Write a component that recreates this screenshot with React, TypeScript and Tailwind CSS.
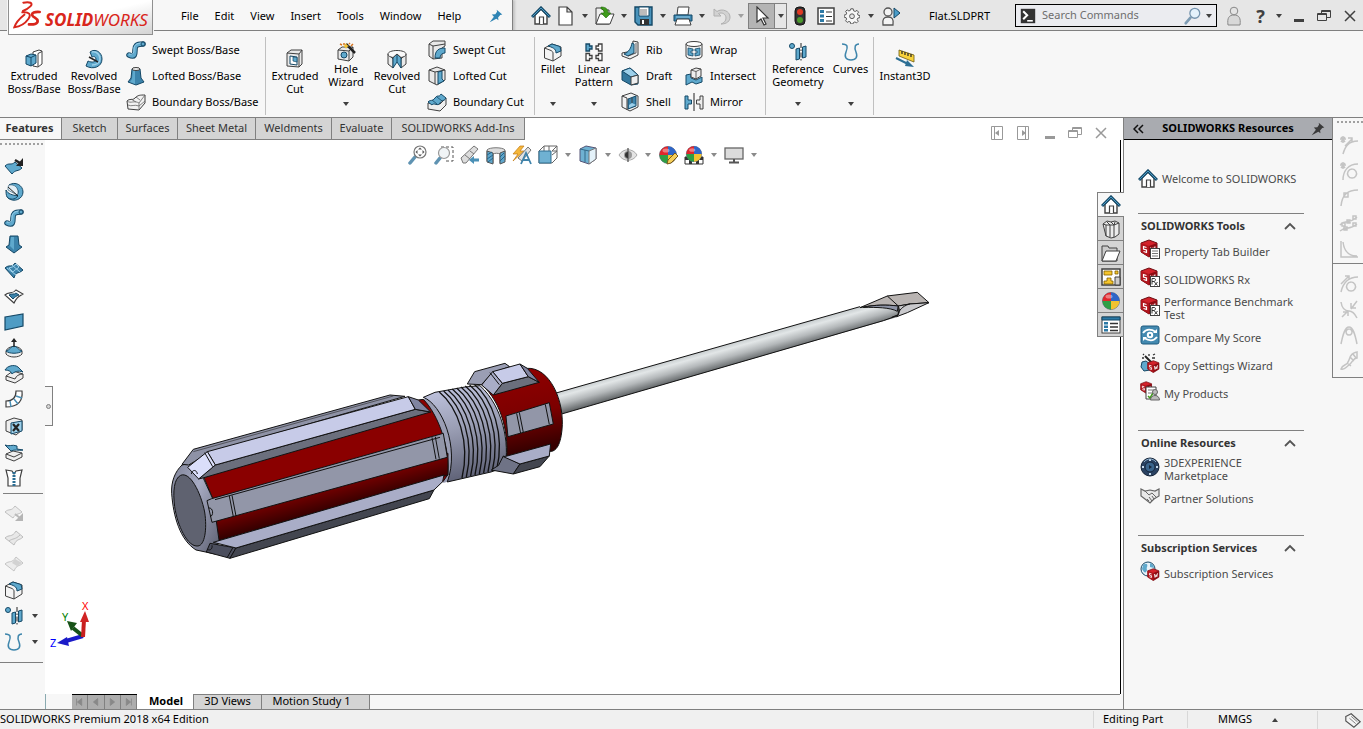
import React from 'react';

type IconProps = { name: string; size?: number };

const BLUE = '#5fa9cd';
const LIGHT = '#9dd0ea';
const NAVY = '#154866';
const INK = '#404040';
const PALE = '#e9e9e9';

const solidCube = (
  <>
    <path d="M1 4l8-3 8 3v9l-8 5-8-5z" fill="#d3222b" stroke="#6d0d12" />
    <path d="M1 4l8 3v11l-8-5z" fill="#b0141c" />
    <path d="M17 4L9 7v11l8-5z" fill="#8e0c13" />
    <path d="M6.500 8.500l-3-1v2.500l3 1v2.500l-3-1M10.500 8.500l1 5 1.500-4 1 3 1-5" fill="none" stroke="#fff" strokeWidth="1.200" />
  </>
);

const smallPaper = (
  <rect x="10.500" y="9.500" width="9" height="10" fill="#fff" stroke={INK} />
);

const colorBall = (
  <>
    <circle cx="10" cy="10" r="8.500" fill="#2f6fd0" stroke="#555" strokeWidth=".6" />
    <path d="M10 10V1.500A8.500 8.500 0 0 1 18.500 10z" fill="#2f66c8" />
    <path d="M10 10V1.500A8.500 8.500 0 0 0 1.500 10z" fill="#e0262b" />
    <path d="M10 10h8.500A8.500 8.500 0 0 1 10 18.500z" fill="#f2c22f" />
    <path d="M10 10v8.500A8.500 8.500 0 0 1 1.500 10z" fill="#2f9e44" />
    <ellipse cx="8" cy="5.500" rx="3.500" ry="2" fill="#fff" opacity=".4" />
  </>
);

const icons: Record<string, React.ReactNode> = {
  extrudedBoss: (
    <>
      <path d="M9 3l6-2 3 1v13l-4 3-5-1z" fill="#fff" stroke={INK} />
      <path d="M14 4.500v13M14 4.500l4-2" stroke={INK} fill="none" />
      <path d="M2 7l5-2 5 1v8l-5 3-5-2z" fill={BLUE} stroke={NAVY} />
      <path d="M2 7l5 1.500L12 6M7 8.500V17" stroke={NAVY} fill="none" />
    </>
  ),
  revolvedBoss: (
    <>
      <path d="M6 3c5-4 12 0 12 7 0 8-9 11-16 7l2-5c4 2 8 1 8-2 0-2-2-3-4-2z" fill={BLUE} stroke={NAVY} />
      <path d="M8 3c5-1 8 3 8 7s-4 6-8 6" stroke={LIGHT} strokeWidth="1.500" fill="none" />
      <path d="M5 8l9 5" stroke="#222" strokeWidth="1.500" />
    </>
  ),
  sweep: (
    <>
      <path d="M3 15c6 3 6-1 6-5s1-6 8-6" stroke={NAVY} strokeWidth="5.500" strokeLinecap="round" fill="none" />
      <path d="M3 15c6 3 6-1 6-5s1-6 8-6" stroke={BLUE} strokeWidth="3.500" strokeLinecap="round" fill="none" />
      <path d="M3 14c5 1 5-2 5-5s2-6 8-6" stroke={LIGHT} strokeWidth="1" fill="none" />
      <circle cx="17" cy="4" r="2" fill={BLUE} stroke={NAVY} />
    </>
  ),
  loft: (
    <>
      <path d="M6 3l-1 9-3 4 8 3 8-3-3-4-1-9z" fill="#3c83ab" stroke={NAVY} />
      <path d="M7 4l-1 9-2 3 5 2V4z" fill={BLUE} />
      <ellipse cx="10" cy="3" rx="4" ry="1.500" fill="#eee" stroke={INK} />
    </>
  ),
  loftDown: (
    <>
      <path d="M6 2l-1 9-3 2 8 6 8-6-3-2-1-9z" fill="#3c83ab" stroke={NAVY} />
      <path d="M7 3l-1 9 4 4V3z" fill={BLUE} />
    </>
  ),
  boundaryBoss: (
    <>
      <path d="M1 9c3-3 5 0 8-3s5-3 10-3v8l-6 7-11-1z" fill="#f2f2f2" stroke={INK} />
      <path d="M1 9c4 3 7-1 12 2l6-8M13 11v6M5 7l5 3M10 5l4 3M2 13c4 2 6-1 11 1l6-5" fill="none" stroke="#666" strokeWidth=".8" />
    </>
  ),
  boundaryCut: (
    <>
      <path d="M1 11l12 1 6-6v7l-6 6-12-2z" fill="#eee" stroke={INK} />
      <path d="M1 10c3-3 4 0 7-4s4 0 6-4l5 4c-2 4-4 1-6 5s-6-1-8 2z" fill={BLUE} stroke={NAVY} />
      <path d="M5 8l5 4M10 5l5 4" stroke={NAVY} strokeWidth=".8" />
    </>
  ),
  extrudedCut: (
    <>
      <path d="M2 4l4-3h11v14l-3 3-12-1z" fill={PALE} stroke={INK} />
      <path d="M2 4l12 1 3-4M14 5v13" fill="none" stroke={INK} />
      <path d="M5 7l7 1v8l-7-1z" fill="#fff" stroke={NAVY} />
      <path d="M8 8l4 .5V13l-4-1z" fill={BLUE} stroke={NAVY} strokeWidth=".7" />
    </>
  ),
  holeWizard: (
    <>
      <path d="M2 8l4-3h11v10l-4 4-11-2z" fill={PALE} stroke={INK} />
      <path d="M2 8l11 1 4-4M13 9v10" fill="none" stroke={INK} />
      <circle cx="8" cy="13" r="3" fill={BLUE} stroke={NAVY} />
      <path d="M10 2l9 9" stroke="#222" strokeWidth="2.500" />
      <path d="M4 2l2 1M8 1v2M13 1l1 1M17 2l-2 2" stroke="#d8731c" strokeWidth="1.500" />
      <path d="M10 1l1 2 2 1-2 1-1 2-1-2-2-1 2-1z" fill="#f6c431" />
    </>
  ),
  revolvedCut: (
    <>
      <path d="M1 5v10l5 4v-9zM19 5v10l-5 4v-9z" fill={PALE} stroke={INK} />
      <path d="M6 9l4-4 4 4v10l-4-6-4 6z" fill={BLUE} stroke={NAVY} />
      <path d="M10 5v8" stroke={NAVY} />
      <path d="M1 5c0-2 4-3.500 9-3.500S19 3 19 5c0 2-2 3-5 3.500L10 5 6 8.500C3 8 1 7 1 5z" fill="#fafafa" stroke={INK} />
    </>
  ),
  sweptCut: (
    <>
      <path d="M2 4l4-3h12v5l-3 2v10l-9 1-4-3z" fill={PALE} stroke={INK} />
      <path d="M2 4l4 2 12-2M6 6v13" fill="none" stroke={INK} />
      <path d="M8 18C8 10 12 8 18 8v5c-3 0-5 2-5 5z" fill={BLUE} stroke={NAVY} />
    </>
  ),
  loftedCut: (
    <>
      <path d="M2 4l8-3 8 3v10l-8 5-8-4z" fill={PALE} stroke={INK} />
      <path d="M2 4l6 2v12M8 6l10-2" fill="none" stroke={INK} />
      <path d="M11 6l4-1v8l2 2-6 3z" fill={BLUE} stroke={NAVY} />
    </>
  ),
  fillet: (
    <>
      <path d="M1.500 6L9 2l9 3v9l-8 5-8.500-3z" fill="#f4f4f4" stroke={INK} />
      <path d="M10 19v-8c0-1-1-2-2-2.500L1.500 6" fill="none" stroke={INK} />
      <path d="M5 4l4-2 8 2.500 1 4.500-5 2c0-3-1-5-8-7z" fill={BLUE} stroke={NAVY} />
    </>
  ),
  linearPattern: (
    <>
      <path d="M2 2h3.500v2H8v3H5.500v2H2z" fill={BLUE} stroke={NAVY} strokeWidth="1.300" />
      <path d="M18 2h-3.500v2H12v3h2.500v2H18zM2 11.500h3.500v2H8v3H5.500v2H2zM18 11.500h-3.500v2H12v3h2.500v2H18z" fill="#fff" stroke={INK} strokeWidth="1.300" />
    </>
  ),
  rib: (
    <>
      <path d="M13 1l5 1v13l-8 4-8-3v-3l10-2z" fill="#f0f0f0" stroke={INK} />
      <path d="M4 14C9 12 11 8 12 3l2 1v9l-6 3z" fill={BLUE} stroke={NAVY} />
      <path d="M8 16l8-3V3" fill="none" stroke={INK} strokeWidth=".8" />
    </>
  ),
  draft: (
    <>
      <path d="M2 5l8-3 8 7v9l-7 1-9-5z" fill="#34789e" stroke={NAVY} />
      <path d="M2 5l8-3 8 7-7 2z" fill={LIGHT} stroke={NAVY} />
      <path d="M11 11l7-2v8l-7 2z" fill="#eee" stroke={INK} />
    </>
  ),
  shell: (
    <>
      <path d="M2 4l9-3 7 3v11l-8 4-8-4z" fill="#f2f2f2" stroke={INK} />
      <path d="M8 7l8-3v10l-8 3z" fill="#3c83ab" stroke={NAVY} />
      <path d="M9 13l3-2 4 2-7 3z" fill={LIGHT} />
      <path d="M2 4l5 2v12M12 6v5" fill="none" stroke={INK} />
    </>
  ),
  wrap: (
    <>
      <path d="M2 4v12c0 4 16 4 16 0V4" fill="#f0f0f0" stroke={INK} />
      <ellipse cx="10" cy="4" rx="8" ry="2.500" fill="#fff" stroke={INK} />
      <path d="M4 8l5 1v2H7v2h2v3l-5-1zM11 9l5-1v7l-5 1v-3h2v-2h-2z" fill={BLUE} stroke={NAVY} strokeWidth=".8" />
    </>
  ),
  intersect: (
    <>
      <path d="M2 9l5-1v4l5 2 6-3v5l-6 2-4-2-6 3z" fill={BLUE} stroke={NAVY} />
      <path d="M7 4l5-2 5 1v7l-5 3-5-2z" fill="#eee" stroke={INK} />
      <path d="M7 4l5 1.500 5-2.500M12 5.500V13" fill="none" stroke={INK} strokeWidth=".8" />
    </>
  ),
  mirror: (
    <>
      <path d="M1 4h3v4h3.500v4H4v5H1z" fill={BLUE} stroke={NAVY} />
      <path d="M19 4h-3v4h-3.500v4H16v5h3z" fill="#eee" stroke={INK} />
      <path d="M10 1v18" stroke="#222" />
    </>
  ),
  refGeometry: (
    <>
      <circle cx="4" cy="4" r="2.500" fill={BLUE} stroke={NAVY} />
      <path d="M8 7l3.500-1v11L8 18zM14.500 5L18 4v11l-3.500 1z" fill={BLUE} stroke={NAVY} />
      <path d="M13 1v18" stroke="#222" strokeDasharray="5 1.500 1.500 1.500" />
    </>
  ),
  curves: <path d="M1 2c6 0 6 3 4 8s0 8 5 8 7-3 5-8-1-8 3-8" fill="none" stroke="#3f86ac" strokeWidth="1.500" />,
  instant: (
    <>
      <path d="M4 1l15 5v7L4 7z" fill="#f8d23c" stroke="#6b5a10" strokeWidth=".8" />
      <path d="M7 2v3M10 3v3M13 4v3M16 5v3" stroke="#222" strokeWidth="1.200" />
      <path d="M1 9l12 6" stroke="#2c6e94" strokeWidth="2" />
      <path d="M12 11l7 7-9-1z" fill="#2c6e94" />
    </>
  ),
  home: (
    <>
      <path d="M4 9v9h12V9l-6-6z" fill="#fff" stroke={INK} strokeWidth="1.400" />
      <path d="M8.500 18v-7h4v7" fill="#fff" stroke={INK} strokeWidth="1.200" />
      <path d="M1 11l9-9 9 9" fill="none" stroke="#164a68" strokeWidth="3" />
      <path d="M1.500 10.500L10 2l8.500 8.500" fill="none" stroke="#4c9cc6" strokeWidth="1" />
    </>
  ),
  page: <path d="M3 1h8l5 5v13H3zM11 1v5h5" fill="#fff" stroke={INK} strokeWidth="1.200" />,
  open: (
    <>
      <path d="M1 2h5l2 2h6v14H1z" fill="#eee" stroke={INK} />
      <path d="M5 8h14l-4 10H1z" fill="#fff" stroke={INK} />
      <path d="M6 1c5 0 7 2 7 6h3l-5 5-5-5h3c0-3-1-4-3-4z" fill="#3f9a1c" stroke="#246b0b" strokeWidth=".6" />
    </>
  ),
  save: (
    <>
      <path d="M1 1h17v18H4l-3-3z" fill="#4993bb" stroke={NAVY} strokeWidth="1.400" />
      <path d="M5 1h10v9H5z" fill="#fff" stroke={NAVY} />
      <path d="M6 4h7M6 6h7M6 8h7" stroke="#555" strokeWidth=".8" />
      <path d="M6 13h9v6H6z" fill="#333" />
      <path d="M8 14h2v4H8z" fill="#fff" />
    </>
  ),
  print: (
    <>
      <path d="M5 1h11l-1 8H4z" fill="#fff" stroke={INK} />
      <path d="M1 9h18v6H1z" fill="#3d88b2" stroke={NAVY} />
      <path d="M3 11h14" stroke={LIGHT} />
      <path d="M4 13h12l2 6H2z" fill="#fff" stroke={INK} />
    </>
  ),
  undo: <path d="M2 3v7h7L6.500 7.500C10 6 14 8 14 12c0 3-2 5-5 6 6 0 9-3 9-7 0-6-8-9-13-5.500z" fill="#d2d2d2" stroke="#b0b0b0" />,
  pointer: <path d="M5 1v15l4-3 3 6 2-1-3-6h5z" fill="#fff" stroke="#333" strokeWidth="1.200" />,
  traffic: (
    <>
      <rect x="5" y="1" width="10" height="18" rx="4" fill="#333" stroke="#111" />
      <circle cx="10" cy="6" r="3" fill="#e03a24" />
      <circle cx="10" cy="14" r="3" fill="#4a9a2c" />
    </>
  ),
  list: (
    <>
      <rect x="2" y="2" width="16" height="16" fill="#fff" stroke={INK} strokeWidth="1.500" />
      <path d="M4 4h4v3H4zM4 8.500h4v3H4zM4 13h4v3H4z" fill="#2c79a5" />
      <path d="M10 6h6M10 10.500h6M10 15h6" stroke="#333" strokeWidth="1.200" />
    </>
  ),
  listBlue: (
    <>
      <rect x="1" y="2" width="18" height="16" fill="#fff" stroke={INK} />
      <path d="M1 2h18v3H1z" fill="#2c79a5" stroke={NAVY} />
      <path d="M3 7h4v2.500H3zM3 10.500h4V13H3zM3 14h4v2.500H3z" fill="#2c79a5" />
      <path d="M9 8.500h8M9 12h8M9 15.500h8" stroke="#333" strokeWidth="1.300" />
    </>
  ),
  gear: (
    <>
      <path
        d="M8.500 1h3l.5 2.500 2 .8L16.300 3l1.900 2.200-1.400 2 .8 1.800 2.200.5v2.500l-2.500.6-.8 1.900 1.300 2.100-2 2-2.200-1.200-1.900.8L11.200 20H8.600L8 17.600l-1.900-.8L4 18l-2-2 1.300-2.100-.8-1.900L.2 11.500V8.800l2.400-.5.8-1.900L2 4.200 4 2.400l2.100 1.300 1.900-.8z"
        fill="#f7f7f7"
        stroke="#555"
        strokeWidth="1.200"
      />
      <circle cx="10" cy="10.300" r="3" fill="#e6e6e6" stroke="#555" strokeWidth="1.200" />
    </>
  ),
  userPlay: (
    <>
      <path d="M2 19c-1-6 1-8 5-8s6 2 5 8z" fill="#f4f4f4" stroke="#555" strokeWidth="1.300" />
      <circle cx="7" cy="6" r="4" fill="#f4f4f4" stroke="#555" strokeWidth="1.300" />
      <path d="M13 2l6 5-6 5z" fill="#4a9cc8" stroke={NAVY} />
    </>
  ),
  user: (
    <>
      <path d="M4 19c-1-7 1-10 6-10s7 3 6 10z" fill="#d8d8d8" stroke="#888" />
      <circle cx="10" cy="5" r="3.800" fill="#e4e4e4" stroke="#888" />
    </>
  ),
  pinBlue: <path d="M11 1l8 7-3 .5-3 3.500.5 4-3-2L1 19l6-8-3-3 5-.5L11.500 4z" fill="#2f84b4" />,
  pinDark: <path d="M11 1l8 7-3 .5-3 3.500.5 4-3-2L1 19l6-8-3-3 5-.5L11.500 4z" fill="#3a3a3a" />,
  prompt: (
    <>
      <rect x="1" y="1" width="18" height="18" fill="#333" />
      <path d="M4 4l5 5-5 5" fill="none" stroke="#fff" strokeWidth="2.500" />
      <path d="M9 16h7" stroke="#fff" strokeWidth="2" />
    </>
  ),
  search: (
    <>
      <path d="M7 12l-5 6" stroke="#7e9cb4" strokeWidth="3" strokeLinecap="round" />
      <circle cx="12" cy="7" r="5.500" fill="#e4f1fb" stroke="#7493ad" strokeWidth="1.400" />
    </>
  ),
  zoomFit: (
    <>
      <path d="M7 12l-5 6" stroke="#5f93b2" strokeWidth="3.500" strokeLinecap="round" />
      <circle cx="12" cy="7" r="6" fill="#fff" stroke="#777" strokeWidth="1.200" />
      <path d="M12 2.500l2 2h-4zM12 11.500l2-2h-4zM7.500 7l2-2v4zM16.500 7l-2-2v4z" fill="#555" />
    </>
  ),
  zoomArea: (
    <>
      <path d="M7 2h12v14H11" fill="none" stroke="#555" strokeDasharray="3 2" />
      <path d="M6 13l-4 5" stroke="#5f93b2" strokeWidth="3.500" strokeLinecap="round" />
      <circle cx="10" cy="8" r="5.500" fill="#f0f4f6" stroke="#999" strokeWidth="1.200" />
    </>
  ),
  prevView: (
    <>
      <path d="M1 13L14 1l4 3L6 18H3z" fill="#ddd" stroke="#777" />
      <path d="M5 10l5 4M10 6l4 3" stroke="#777" />
      <path d="M9 15l5-4v2.500h5v3h-5V19z" fill="#4a90b6" />
    </>
  ),
  section: (
    <>
      <path d="M1 5c2-3 16-3 18 0v10l-5 3v-9c-2-1-5-1-7 0v9l-6-2z" fill="#ddd" stroke="#777" />
      <path d="M1 6l6 2v11l-6-2zM14 8l5-2v11l-5 2z" fill="#5fa6cb" stroke="#555" />
      <path d="M1 10l5-3M1 14l6-4M2 17l5-4M14 12l4-4M14 16l5-5" stroke="#21658d" />
    </>
  ),
  dynamic: (
    <>
      <path d="M8 1L1 9h5l-5 7 11-10H8l4-5z" fill="#f5b73a" stroke="#c27a16" strokeWidth=".7" />
      <path d="M6 13L16 2l3 3L10 16z" fill="#e2e2e2" stroke="#777" />
      <path d="M9 19l5-11 5 11M11 15h6" fill="none" stroke="#3f83ab" strokeWidth="1.800" />
    </>
  ),
  orient: (
    <>
      <path d="M1 6l5-5h13v12l-5 5H1z" fill="#fff" stroke="#666" />
      <path d="M6 1v5M11 1v5M14 6h5M14 10l5-4M19 1l-5 5" stroke="#666" fill="none" />
      <path d="M1 6h12v12H1z" fill="#6fb1d2" stroke="#2e6c8f" />
    </>
  ),
  display: (
    <>
      <path d="M2 4l6-3 10 2v11l-7 5-9-3z" fill="#6fb1d2" stroke="#557" />
      <path d="M11 6l7-3v11l-7 5z" fill="#e4f2fa" stroke="#777" />
      <path d="M2 4l9 2M7 5v12" stroke="#346a88" fill="none" />
    </>
  ),
  eye: (
    <>
      <path d="M1 10c4-7 14-7 18 0-4 7-14 7-18 0z" fill="#e4e4e4" stroke="#aaa" />
      <circle cx="10" cy="10" r="4" fill="#999" />
      <path d="M10 3v14" stroke="#555" strokeWidth="1.300" />
      <path d="M10 7a3 3 0 0 0 0 6z" fill="#333" />
    </>
  ),
  appearance: (
    <>
      {colorBall}
      <path d="M9 19l1-4 7-7 3 3-7 7z" fill="#f6cf5a" stroke="#7a5a1c" />
    </>
  ),
  scene: (
    <>
      <path d="M1 12h18v7H1z" fill="#fff" stroke="#333" />
      <path d="M1 12h4v3H1zM15 12h4v3h-4zM5 15h3v4H5zM12 15h3v4h-3z" fill="#333" />
      <g transform="translate(1 0) scale(.9)">{colorBall}</g>
    </>
  ),
  monitor: (
    <>
      <rect x="1" y="3" width="18" height="11" fill="#dcdcdc" stroke="#666" strokeWidth="1.300" />
      <path d="M10 14v3M5 17.500h10" stroke="#555" strokeWidth="2" />
    </>
  ),
  ball: colorBall,
  library: (
    <>
      <path d="M2 5l4-3 4 1 4-1 4 2v11l-4 3-4 1-5-2z" fill="#ececec" stroke={INK} />
      <path d="M2 5l3 1v11M6 3l3 3v12M10 3l3 3v12M5 6h8l5-2M14 3l-1 3" fill="none" stroke={INK} />
    </>
  ),
  folder: (
    <>
      <path d="M1 3h6l1 2h8v13H1z" fill="#ccc" stroke={INK} />
      <path d="M5 8h14l-4 10H1z" fill="#fff" stroke={INK} />
    </>
  ),
  palette: (
    <>
      <rect x="1" y="2" width="18" height="16" fill="#fff" stroke={INK} strokeWidth="1.500" />
      <path d="M3 4h8v4H3zM14 4h3v3h-3zM3 14h3v-3h4v3h2v3H3z" fill="#f6c52c" stroke="#806000" strokeWidth=".8" />
      <path d="M14 10h5v8h-5z" fill="#ccc" stroke={INK} />
    </>
  ),
  surfExtrude: (
    <>
      <path d="M1 10c4-4 6 0 10-4l7 6c-4 4-6 1-10 6z" fill={BLUE} stroke={NAVY} />
      <path d="M11 4l5 3" stroke="#222" strokeWidth="2.500" />
      <path d="M19 2v8h-7z" fill="#222" />
    </>
  ),
  surfRevolve: (
    <>
      <path d="M5 3c6-4 14 0 14 7s-9 11-15 6c5 1 10-2 10-6S10 3 5 3z" fill={BLUE} stroke={NAVY} />
      <path d="M5 3c6-1 9 3 9 7 0 1 0 2-1 3L4 8c0-2 0-4 1-5z" fill="#e4f0f6" stroke={NAVY} strokeWidth=".6" />
      <path d="M2 8c2 4 6 5 12 6-3 4-8 4-11 1-1-2-1-5-1-7z" fill={BLUE} stroke={NAVY} />
      <path d="M4 5l10 9" stroke="#222" />
    </>
  ),
  surfBoundary: (
    <>
      <path d="M1 8c4-4 7 0 10-5l8 7c-4 4-7 1-9 8z" fill="#3c83ab" stroke={NAVY} />
      <path d="M5 8c3-1 5-1 7-4l3 3c-3 3-5 3-6 5zM3 8l9 7M8 5l8 7" stroke={LIGHT} fill="none" />
    </>
  ),
  surfFill: (
    <>
      <path d="M1 9c4-4 7 0 11-5l7 4c-5 3-6 3-9 9z" fill="#fff" stroke={INK} strokeWidth="1.200" />
      <path d="M5 9c3-2 5 0 7-2l3 2c-3 1-4 2-6 4z" fill="#3c83ab" stroke={NAVY} />
    </>
  ),
  surfPlane: <path d="M1 5l18-3v12L1 18z" fill="#4f9cc4" stroke={NAVY} strokeWidth="1.200" />,
  freeform: (
    <>
      <path d="M2 13c2-6 14-6 16 0v3c-3 4-13 4-16 0z" fill="#eee" stroke={INK} />
      <path d="M2 13c4-1 5-5 8-5s4 4 8 5c-3 3-13 3-16 0z" fill={BLUE} stroke={NAVY} />
      <path d="M10 9V3" stroke="#222" strokeWidth="1.500" />
      <path d="M10 0l3 4H7z" fill="#222" />
    </>
  ),
  ruled: (
    <>
      <path d="M2 12l7-5 10 3v4l-8 5-9-3z" fill="#eee" stroke={INK} />
      <path d="M2 12l9 3c1-3 4-5 8-5" fill="none" stroke={INK} />
      <path d="M1 6c2-4 9-6 13-3l5 5c-5-2-9 0-11 2-1-3-4-4-7-4z" fill={BLUE} stroke={NAVY} />
    </>
  ),
  bend: (
    <>
      <path d="M12 1h6c1 9-3 16-16 16v-6c7 0 10-3 10-10z" fill="#fff" stroke={INK} strokeWidth="1.200" />
      <path d="M12 6l6 2M10 9l4 5M6 11l1 6" stroke="#4a90b6" strokeWidth="1.500" />
    </>
  ),
  deleteFace: (
    <>
      <path d="M2 5l8-3 8 2v10l-6 5-10-4z" fill="#eee" stroke={INK} />
      <path d="M7 7l11-2v10l-11 3z" fill={LIGHT} stroke={NAVY} />
      <path d="M9 8l6 7M15 8l-6 7" stroke="#222" strokeWidth="2.200" />
    </>
  ),
  replaceFace: (
    <>
      <path d="M2 12l7-3 9 2v4l-8 4-8-3z" fill="#eee" stroke={INK} />
      <path d="M2 12l8 3 8-4" fill="none" stroke={INK} />
      <path d="M1 3c4 2 7-1 12 1v3l6 1c-5 1-8-1-12 1z" fill={BLUE} stroke={NAVY} />
    </>
  ),
  knit: (
    <>
      <path d="M2 2l6 1 2 3 2-3 6-1-2 8v8H4v-8z" fill="#fff" stroke={INK} strokeWidth="1.200" />
      <path d="M10 4v15" stroke="#2c6e94" strokeWidth="3" strokeDasharray="2 1" />
    </>
  ),
  greySurfArrow: (
    <>
      <path d="M1 10c4-4 6 0 10-6l7 6c-4 3-6 1-9 6z" fill="#ececec" stroke="#c0c0c0" />
      <path d="M11 12l5 4" stroke="#bbb" strokeWidth="2" />
      <path d="M19 11v8h-8z" fill="#b5b5b5" />
    </>
  ),
  greySurf: (
    <>
      <path d="M1 10c4-4 7 0 11-7l7 6c-4 4-6 1-9 8z" fill="#e8e8e8" stroke="#bdbdbd" />
      <path d="M5 13c4-3 6-1 11-6" stroke="#bdbdbd" fill="none" />
    </>
  ),
  greyPatch: (
    <>
      <path d="M1 10c4-4 7 0 11-7l7 6c-4 4-6 1-9 8z" fill="#ececec" stroke="#c4c4c4" />
      <path d="M11 5l7 4-5 3-5-3z" fill="#d2d2d2" />
    </>
  ),
  swBuilder: <>{solidCube}{smallPaper}<path d="M12 12h6M12 14.500h6M12 17h6" stroke="#777" /></>,
  swRx: <>{solidCube}{smallPaper}<path d="M12 17.500v-6h2c2 0 2 2.500 0 3h-2m2 0l3.500 4m0-3.500l-3 3.500" stroke="#222" fill="none" strokeWidth=".9" /></>,
  compare: (
    <>
      <rect x="1" y="1" width="18" height="18" rx="2" fill="#4389b0" stroke="#1f5b7e" />
      <circle cx="10" cy="10" r="2.200" fill="none" stroke="#fff" strokeWidth="2" />
      <path d="M3 8c3-4 8-4 13-1M17 12c-3 4-8 4-13 1" fill="none" stroke="#fff" strokeWidth="1.800" />
      <path d="M17 4v4h-4zM3 16v-4h4z" fill="#fff" />
    </>
  ),
  wizard: (
    <>
      <path d="M2 9l4-1 4 3v6l-6 1-3-4z" fill={BLUE} stroke={NAVY} />
      <path d="M5 3l8 8" stroke="#222" strokeWidth="2" />
      <path d="M3 1l1 1M9 1v2M13 2l2-1M12 5h3M2 5h2" stroke="#333" strokeWidth="1.300" />
      <g transform="translate(7 7) scale(.7)">{solidCube}</g>
    </>
  ),
  products: (
    <>
      <g transform="scale(.68)">{solidCube}</g>
      <path d="M6 6h10v12H6z" fill="#fff" stroke={INK} />
      <path d="M8 9h6M8 12h4" stroke="#777" />
      <path d="M8 15l2 2 3-5" stroke="#3f9a1c" fill="none" strokeWidth="1.500" />
      <circle cx="15" cy="11" r="2.500" fill="#bbb" stroke="#666" />
      <path d="M10.500 19c0-6 9-6 9 0z" fill="#bbb" stroke="#666" />
    </>
  ),
  market: (
    <>
      <circle cx="10" cy="10" r="9" fill="#2a4262" stroke="#142236" />
      <circle cx="10" cy="10" r="5" fill="#3a648c" stroke="#16263c" />
      <path d="M9 8l3 2-3 2z" fill="#152437" />
      <path d="M10 2v2M10 16v2M2 10h2M16 10h2" stroke="#c4d8ea" strokeWidth="2" />
      <path d="M4 5c3-4 9-4 12 0" stroke="#8fb2d0" fill="none" />
    </>
  ),
  handshake: (
    <>
      <path d="M1 3l4 2 5-1 5 1 4-2v7l-5 3-4 4-5-4-4-3z" fill="#e8e8e8" stroke="#666" strokeWidth="1.200" />
      <path d="M5 5l4 4 3-2 4 4M7 13l2 2M9 11l3 4M12 10l2 3" stroke="#666" fill="none" />
    </>
  ),
  globe: (
    <>
      <circle cx="8" cy="8" r="7" fill="#e8f3fa" stroke={NAVY} />
      <path d="M3 4c4-3 5 0 4 2s1 3-1 5-3-2-4-3zM10 2c3 1 4 3 4 5l-4-1z" fill={BLUE} />
      <g transform="translate(7 7) scale(.7)">{solidCube}</g>
    </>
  ),
};

const greyCurves = [
  'M4 19C6 12 9 6 19 6M6 11l7-7M9 3h4v4M4 1v7M1 4h6M2 2l4 5M6 2L2 7',
  'M4 19C4 10 9 3 19 3M13 8a4.500 4.500 0 1 0 .1 0M4 1v7M1 4h6M2 2l4 5M6 2L2 7',
  'M2 19C3 8 8 3 19 3M5 6h4v4H5z',
  'M1 12c5-6 8 0 17-8M1 18c6-5 9 0 17-7M3 10h3v3H3zM8 7h3v3H8zM14 3h3v3h-3zM5 14h3v3H5zM14 10h3v3h-3z',
  'M2 2v16h17M4 3c1 9 5 14 14 14',
  'M2 19C4 10 9 4 19 4M12 9a4.500 4.500 0 1 0 .1 0M2 11l8-8M6 3h4v4',
  'M2 3c1 7 4 9 8 9s6 3 8 7M18 2l-6 8M8 13l-5 5M12 4v5h5M4 13h5v4',
  'M2 19C4 9 6 2 10 2s6 7 8 17M10 4a3 3 0 1 0 .1 0',
  'M2 18c2-6 6-2 8-9s5-7 8-8v6c-4 0-4 4-8 7s-4 5-8 4zM8 12l4 3M11 6l4 4M14 3l3 4',
];

const Icon = ({ name, size = 20 }: IconProps) => (
  <svg viewBox="0 0 20 20" width={size} height={size} className="shrink-0" aria-hidden="true">
    {icons[name]}
  </svg>
);

const Arrow = ({ color = '#404040' }: { color?: string }) => (
  <svg viewBox="0 0 6 4" width={6} height={4} className="shrink-0" aria-hidden="true">
    <path d="M0 0h6L3 4z" fill={color} />
  </svg>
);

const menus = ['File', 'Edit', 'View', 'Insert', 'Tools', 'Window', 'Help'];

const fileTools = [
  { icon: 'page', label: 'New' },
  { icon: 'open', label: 'Open' },
  { icon: 'save', label: 'Save' },
  { icon: 'print', label: 'Print' },
  { icon: 'undo', label: 'Undo', off: true },
];

const Logo = () => (
  <div className="z-10 ml-2 flex h-[35px] w-[145px] shrink-0 items-center gap-1 border border-t-0 border-[#909090] bg-linear-to-br from-white from-50% to-[#d4d4d4] pl-1 shadow-[0_0_0_1px_#f7f7f7]">
    <svg viewBox="0 0 84 84" width={28} height={28} className="-mt-1 shrink-0" aria-hidden="true">
      <g fill="none" stroke="#d9261c" strokeLinecap="round">
        <path d="M31 5C50 1 62 6 52 16c-6 6-13 10-22 14" strokeWidth="6" />
        <path d="M28 34c20-2 28 6 18 20C36 68 20 77 4 79c4-13 16-27 30-38" strokeWidth="6" />
        <path d="M80 33c-15-1-25 2-22 10 2 7 16 8 16 17 0 9-12 11-26 10" strokeWidth="8" />
      </g>
    </svg>
    <span className="pt-1 text-[17px] italic leading-none text-[#d9261c]">
      <b>SOLID</b>WORKS
    </span>
  </div>
);

const TitleBar = () => (
  <header className="flex h-[31px] items-start border-b border-[#808080] bg-[#e6e6e6]">
    <Logo />
    <div className="flex h-8 w-[360px] shrink-0 items-center border-r border-[#808080] bg-[#f7f7f7] bg-clip-padding pl-5 shadow-[2px_0_2px_#c4c4c4] [clip-path:inset(0_-4px_2px_0)]">
      <nav className="flex flex-1">
        {menus.map((m) => (
          <button key={m} className="px-2">{m}</button>
        ))}
      </nav>
      <button aria-label="Pin menu" className="mr-2 p-px">
        <Icon name="pinBlue" size={14} />
      </button>
    </div>
    <div className="flex h-[31px] shrink-0 items-center pl-[15px]">
      <button aria-label="Home" className="flex w-[25px] justify-center"><Icon name="home" /></button>
      {fileTools.map((t) => (
        <div key={t.icon} className="flex w-[39px] items-center">
          <button aria-label={t.label} className="flex w-[25px] justify-center"><Icon name={t.icon} /></button>
          <button aria-label={`${t.label} options`} className="flex w-[14px] justify-center">
            <Arrow color={t.off ? '#a0a0a0' : '#404040'} />
          </button>
        </div>
      ))}
      <div className="flex h-[26px] w-[39px] border border-[#808080]">
        <button aria-label="Select" className="flex w-[26px] items-center justify-center border-r border-[#808080] bg-[#b4b4b4]">
          <Icon name="pointer" />
        </button>
        <button aria-label="Select options" className="flex flex-1 items-center justify-center"><Arrow /></button>
      </div>
      <button aria-label="Rebuild" className="flex w-[26px] justify-center"><Icon name="traffic" /></button>
      <button aria-label="File properties" className="flex w-[26px] justify-center"><Icon name="list" /></button>
      <button aria-label="Options" className="flex w-[25px] justify-center"><Icon name="gear" size={16} /></button>
      <button aria-label="Options list" className="flex w-[14px] justify-center"><Arrow /></button>
      <button aria-label="Login" className="flex w-[26px] justify-center"><Icon name="userPlay" /></button>
    </div>
    <h1 className="flex h-8 flex-1 items-center justify-center">Flat.SLDPRT</h1>
    <div className="mt-1 flex h-[23px] w-[202px] shrink-0 items-center border border-black bg-[#ebecf0] px-1">
      <Icon name="prompt" size={16} />
      <input
        aria-label="Search Commands"
        placeholder="Search Commands"
        className="ml-0.5 w-0 flex-1 bg-transparent px-1 outline-none placeholder:text-[#6e6e6e]"
      />
      <button aria-label="Search"><Icon name="search" size={18} /></button>
      <button aria-label="Search options" className="pl-1"><Arrow /></button>
    </div>
    <div className="flex h-[31px] shrink-0 items-center">
      <button aria-label="Account" className="flex w-[34px] justify-center"><Icon name="user" /></button>
      <button aria-label="Help" className="w-[19px] text-lg font-bold text-[#404040]">?</button>
      <button aria-label="Help options" className="flex w-[17px] justify-center"><Arrow /></button>
      <WindowButtons color="#404040" />
    </div>
  </header>
);

const WindowButtons = ({ color }: { color: string }) => (
  <>
    <button aria-label="Minimize" className="flex w-6 justify-center">
      <svg viewBox="0 0 14 14" width={14} height={14}><path d="M2 11.500h10" stroke={color} strokeWidth="3" /></svg>
    </button>
    <button aria-label="Restore" className="flex w-[26px] justify-center">
      <svg viewBox="0 0 14 14" width={14} height={14} fill="none" stroke={color}>
        <path d="M4.500 4V1.500h9v7H10M.5 4.500h9v7h-9zM.5 5.500h9M4.500 2.500h9" />
      </svg>
    </button>
    <button aria-label="Close" className="flex w-[26px] justify-center">
      <svg viewBox="0 0 14 14" width={14} height={14}><path d="M2 2l10 10M12 2L2 12" stroke={color} strokeWidth="1.500" /></svg>
    </button>
  </>
);

type BigProps = { icon: string; lines: string[]; className: string; menu?: boolean };

const BigTool = ({ icon, lines, className, menu }: BigProps) => (
  <button className={`flex shrink-0 flex-col items-center leading-[13px] ${menu ? 'pt-[5px]' : 'pt-3'} ${className}`}>
    <Icon name={icon} />
    <span className="flex h-10 flex-col items-center whitespace-nowrap">
      {lines.map((l) => <span key={l}>{l}</span>)}
    </span>
    {menu && <Arrow />}
  </button>
);

const SmallTools = ({ items, className }: { items: string[][]; className: string }) => (
  <div className={`flex shrink-0 flex-col ${className}`}>
    {items.map(([icon, label]) => (
      <button key={label} className="flex h-[26px] items-center gap-1.5 whitespace-nowrap">
        <Icon name={icon} />
        {label}
      </button>
    ))}
  </div>
);

const Ribbon = () => (
  <section className="flex border-b border-[#808080] bg-[#f7f7f7] pb-0.5 pt-1.5">
    <div className="flex border-r border-[#c0c0c0] pl-1">
      <BigTool icon="extrudedBoss" lines={['Extruded', 'Boss/Base']} className="w-[60px]" />
      <BigTool icon="revolvedBoss" lines={['Revolved', 'Boss/Base']} className="w-[60px]" />
      <SmallTools
        className="w-[141px] pl-0.5"
        items={[['sweep', 'Swept Boss/Base'], ['loft', 'Lofted Boss/Base'], ['boundaryBoss', 'Boundary Boss/Base']]}
      />
    </div>
    <div className="flex border-r border-[#c0c0c0] pl-[3px]">
      <BigTool icon="extrudedCut" lines={['Extruded', 'Cut']} className="w-[52px]" />
      <BigTool icon="holeWizard" lines={['Hole', 'Wizard']} className="w-[50px]" menu />
      <BigTool icon="revolvedCut" lines={['Revolved', 'Cut']} className="w-[52px]" />
      <SmallTools
        className="w-[111px] pl-1"
        items={[['sweptCut', 'Swept Cut'], ['loftedCut', 'Lofted Cut'], ['boundaryCut', 'Boundary Cut']]}
      />
    </div>
    <div className="flex border-r border-[#c0c0c0]">
      <BigTool icon="fillet" lines={['Fillet']} className="w-9" menu />
      <BigTool icon="linearPattern" lines={['Linear', 'Pattern']} className="w-[46px]" menu />
      <SmallTools className="w-[67px] pl-[3px]" items={[['rib', 'Rib'], ['draft', 'Draft'], ['shell', 'Shell']]} />
      <SmallTools className="w-[81px]" items={[['wrap', 'Wrap'], ['intersect', 'Intersect'], ['mirror', 'Mirror']]} />
    </div>
    <div className="flex border-r border-[#c0c0c0] pl-0.5">
      <BigTool icon="refGeometry" lines={['Reference', 'Geometry']} className="w-[60px]" menu />
      <BigTool icon="curves" lines={['Curves']} className="w-[45px]" menu />
    </div>
    <BigTool icon="instant" lines={['Instant3D']} className="w-[62px]" />
  </section>
);

const tabs = [
  { label: 'Sketch', width: 'w-[56px]' },
  { label: 'Surfaces', width: 'w-[60px]' },
  { label: 'Sheet Metal', width: 'w-[78px]' },
  { label: 'Weldments', width: 'w-[76px]' },
  { label: 'Evaluate', width: 'w-[60px]' },
  { label: 'SOLIDWORKS Add-Ins', width: 'w-[133px]' },
];

const TabRow = () => (
  <div className="flex h-[22px] justify-between bg-white">
    <div className="flex border-b border-[#808080]" role="tablist">
      <button role="tab" aria-selected="true" className="w-[62px] border-r border-[#808080] bg-[#f7f7f7] pr-0.5 font-bold text-[#333]">
        Features
      </button>
      {tabs.map((t) => (
        <button key={t.label} role="tab" className={`${t.width} whitespace-nowrap border-r border-[#808080] bg-[#d4d4d4] text-[#333]`}>
          {t.label}
        </button>
      ))}
    </div>
    <div className="flex items-start pr-[9px] pt-2">
      <button aria-label="Collapse left" className="flex w-[26px] justify-center">
        <svg viewBox="0 0 14 14" width={14} height={14}>
          <path d="M1.500.5h11v13h-11zM4.500 1v12" fill="none" stroke="#999" /><path d="M9 4v6L5 7z" fill="#999" />
        </svg>
      </button>
      <button aria-label="Collapse right" className="mr-0.5 flex w-[26px] justify-center">
        <svg viewBox="0 0 14 14" width={14} height={14}>
          <path d="M1.500.5h11v13h-11zM9.500 1v12" fill="none" stroke="#999" /><path d="M6 4v6l4-3z" fill="#999" />
        </svg>
      </button>
      <WindowButtons color="#999" />
    </div>
  </div>
);

const surfaceTools = [
  'surfExtrude', 'surfRevolve', 'sweep', 'loftDown', 'surfBoundary', 'surfFill', 'surfPlane',
  'freeform', 'ruled', 'bend', 'deleteFace', 'replaceFace', 'knit',
];
const surfaceEdits = ['greySurfArrow', 'greySurf', 'greyPatch', 'fillet', 'refGeometry', 'curves'];

const LeftToolbar = () => (
  <aside className="w-[45px] shrink-0 bg-[#f7f7f7] pr-0.5">
    <div className="mt-[3px] h-[10px] border-t-2 border-dotted border-[#a0a0a0]" />
    {surfaceTools.map((t) => (
      <button key={t} aria-label={t} className="flex h-[26px] items-center pl-1"><Icon name={t} /></button>
    ))}
    <hr className="mb-[5px] ml-[3px] mt-0.5 border-[#808080]" />
    {surfaceEdits.map((t, i) => (
      <div key={t} className="flex h-[26px] items-center gap-2 pl-1">
        <button aria-label={t}><Icon name={t} /></button>
        {i > 3 && <Arrow />}
      </div>
    ))}
    <hr className="mt-[7px] border-[#808080]" />
  </aside>
);

const viewTools = [
  { icon: 'zoomFit' }, { icon: 'zoomArea' }, { icon: 'prevView' }, { icon: 'section' }, { icon: 'dynamic' },
  { icon: 'orient', menu: true }, { icon: 'display', menu: true }, { icon: 'eye', menu: true },
  { icon: 'appearance' }, { icon: 'scene', menu: true }, { icon: 'monitor', menu: true },
];

const ViewToolbar = () => (
  <div className="relative flex justify-center pt-[5px]">
    {viewTools.map((t) => (
      <div key={t.icon} className="flex items-center">
        <button aria-label={t.icon} className="flex w-[26px] justify-center"><Icon name={t.icon} /></button>
        {t.menu && (
          <button aria-label={`${t.icon} options`} className="flex w-[14px] justify-center"><Arrow color="#8a8a8a" /></button>
        )}
      </div>
    ))}
  </div>
);

// thread crests, drawn from the handle side towards the head
const threads = Array.from({ length: 9 }, (_, i) => {
  const x = 838 + i * 13;
  const y = 126 - i * 3;
  return `M${x} ${y}C${x + 55} ${y + 45} ${x + 94} ${y + 150} ${x + 68} ${y + 258}`;
});

const Model = () => (
  <svg viewBox="45 140 1075 554" className="absolute inset-0 h-full w-full" role="img" aria-label="Screwdriver model">
    <defs>
      <linearGradient id="shaft" gradientUnits="userSpaceOnUse" x1="480" y1="205" x2="498" y2="269">
        <stop offset="0" stopColor="#c2c8ca" />
        <stop offset=".25" stopColor="#e2e6e7" />
        <stop offset=".6" stopColor="#b4b8ba" />
        <stop offset="1" stopColor="#65696b" />
      </linearGradient>
      <linearGradient id="redLow" gradientUnits="userSpaceOnUse" x1="500" y1="420" x2="516" y2="480">
        <stop offset="0" stopColor="#700000" />
        <stop offset="1" stopColor="#320000" />
      </linearGradient>
      <linearGradient id="head" x1="0" y1="0" x2=".2" y2="1">
        <stop offset=".1" stopColor="#900000" />
        <stop offset=".6" stopColor="#7c0000" />
        <stop offset="1" stopColor="#360000" />
      </linearGradient>
      <linearGradient id="neck" x1="0" y1="0" x2=".2" y2="1">
        <stop offset="0" stopColor="#c4c8e4" />
        <stop offset=".5" stopColor="#9a9eb4" />
        <stop offset="1" stopColor="#62657a" />
      </linearGradient>
      <linearGradient id="rim" x1="0" y1="0" x2="1" y2="1">
        <stop offset="0" stopColor="#7c8094" />
        <stop offset=".4" stopColor="#a8acc4" />
        <stop offset="1" stopColor="#5c5f70" />
      </linearGradient>
    </defs>
    <g transform="translate(550 280) scale(.3333)" stroke="#111" strokeWidth="3" strokeLinejoin="round">
      <path d="M15 340L930 80l115-2 0 32L35 402z" fill="url(#shaft)" stroke="none" />
      <path d="M15 340L930 80M35 402l965-280 45-16" fill="none" />
      <path d="M930 83l82-35 90-11 35 31-57 4-35 6c-35-4-75-4-115 5z" fill="#b9b4b2" />
      <path d="M1045 78l35-6 57-4-65 30-32 12c10-12 10-20 5-32z" fill="#c9c9cc" />
      <path d="M940 82c40 0 80 0 102 12l3-16c-35-4-70-4-105 4z" fill="#8d93a6" />
      <path d="M1012 48l33 30v26l-20 8M1045 100c5-14 20-25 35-28" fill="none" />
    </g>
    <g transform="translate(160 350) scale(.3333)" stroke="#111" strokeWidth="3" strokeLinejoin="round">
      <path d="M775 150l35-6 70 60 20 180-50 15-20-100z" fill="#9a9eb4" stroke="none" />
      <path d="M790 142c55 20 110 150 72 254l131-30 42-15c14-70-5-180-75-244l-45 4-90 16z" fill="url(#neck)" />
      {threads.map((d) => <path key={d} d={d} fill="none" strokeWidth="4" />)}
      <path d="M132 383L775 150l15-2c45 45 82 150 73 227l-14 20-671 175-18-120z" fill="#8a0000" />
      <path d="M162 500L864 310l0 65L176 572z" fill="url(#redLow)" />
      <path d="M66 345C45 365 33 395 35 430c5 70 25 140 73 170l57 12 12-42-17-120-30-65-40-45z" fill="url(#rim)" />
      <path d="M62 376c28-12 60 50 72 110 8 52 0 100-20 102-32 4-62-62-70-118-6-46-2-84 18-94z" fill="#5f6270" />
      <path d="M66 343l34-45 590-163 45 4-585 168-64 38z" fill="#8e92a6" />
      <path d="M100 305L700 138" fill="none" stroke="#333" strokeWidth="2" />
      <path d="M116 387l50-42 600-167 46 8L132 383z" fill="#6b6f7d" />
      <path d="M142 305L745 140l21 38-600 167z" fill="#c7cbe8" />
      <path d="M745 140l30 10 37 36-46-8z" fill="#8084a0" />
      <path d="M83 352l59-47 24 40-50 42z" fill="#dadefa" />
      <path d="M134 308l24 42M94 372c2-14 16-14 18 0" fill="none" />
      <path d="M155 446L850 250l12 72L156 517l-15-65z" fill="#9296a8" />
      <path d="M165 449L840 262M208 438l12 62M216 436l12 62M816 262l12 66M826 260l12 66M146 474c14-2 16 24 4 26" fill="none" />
      <path d="M150 580l78 14-18 31-71-19z" fill="#4c4f5e" />
      <path d="M228 594l594-174-14 26-598 179z" fill="#434650" />
      <path d="M160 577l692-202-4 20-26 25-594 174z" fill="#a9adc7" />
      <path d="M218 594l-16 28M142 598c10 6 16-4 14-12" fill="none" />
      <path d="M955 97l145-42c70-5 115 100 106 185-5 50-20 68-42 64l-124 18c6-80-20-180-85-225z" fill="url(#head)" />
      <path d="M922 102l22-37 91-25 14 10-50 18-35 36z" fill="#9a9eb4" />
      <path d="M1000 135l27-35 78-20 33 17z" fill="#6b6f7d" />
      <path d="M998 65l82-23 25 38-78 20z" fill="#c7cbe8" />
      <path d="M1080 42l22 13 36 42-33-17z" fill="#8084a0" />
      <path d="M965 105l33-40 29 35-27 35z" fill="#a9adc7" />
      <path d="M990 68l28 36" fill="none" />
      <path d="M1038 198l130-40 12 64-136 38z" fill="#9296a8" />
      <path d="M1070 190l12 60M1078 187l12 60M1156 163l12 60" fill="none" />
      <path d="M1030 318l50 24-20 30-66-12 22-14z" fill="#6f7386" />
      <path d="M1080 342l88-24-28 32-80 22z" fill="#434650" />
      <path d="M1042 318l130-36-4 36-88 24-50-22z" fill="#a9adc7" />
    </g>
    <g strokeWidth="4" fontSize="11">
      <path d="M83 636L66 641" stroke="#1a1ac8" />
      <path d="M83 636L73 628" stroke="#175217" />
      <path d="M83 637l1-17" stroke="#c81e1e" />
      <path d="M57 643l10-6 2 9z" fill="#1a1ac8" />
      <path d="M67 621l10 2-6 8z" fill="#175217" />
      <path d="M85 611l4 11h-9z" fill="#d02424" />
      <text x="82" y="610" fill="#ff0000">X</text>
      <text x="62" y="621" fill="#008000">Y</text>
      <text x="50" y="647" fill="#0000ff">Z</text>
    </g>
  </svg>
);

const paneTabs = ['home', 'library', 'folder', 'palette', 'ball', 'listBlue'];

const TaskPaneTabs = () => (
  <div className="absolute -right-1 top-[52px] z-10 flex w-[27px] flex-col border-l border-t border-[#808080]">
    {paneTabs.map((t, i) => (
      <button
        key={t}
        aria-label={t}
        className={`flex h-6 items-center justify-center border-b border-[#808080] ${i === 0 ? 'bg-[#f7f7f7]' : 'border-r bg-[#d4d4d4]'}`}
      >
        <Icon name={t} />
      </button>
    ))}
  </div>
);

const BottomTabs = () => (
  <div className="flex h-[15px] bg-[#f7f7f7] leading-3">
    <div className="ml-[45px] w-[27px] border-l border-[#8aaab0]" />
    <div className="flex w-[65px] border-t border-black">
      {['M9 3v8L4 7zM3 3v8', 'M9 3v8L4 7z', 'M5 3v8l5-4z', 'M5 3v8l5-4zM11 3v8'].map((d, i) => (
        <button key={d} aria-label={`Scroll tabs ${i + 1}`} className="flex flex-1 items-center justify-center border-r border-[#808080] bg-[#adadad]">
          <svg viewBox="0 0 14 14" width={12} height={12}><path d={d} fill="#888" stroke="#888" /></svg>
        </button>
      ))}
    </div>
    <button className="w-[57px] border-r border-[#808080] bg-white pb-0.5 pl-0.5 font-bold">Model</button>
    <button className="w-[68px] border-r border-t border-[#808080] bg-[#d4d4d4] pb-0.5">3D Views</button>
    <button className="w-[108px] border-r border-t border-[#808080] bg-[#d4d4d4] pb-0.5 pr-2">Motion Study 1</button>
    <div className="mr-[3px] flex-1 border-t border-[#808080]" />
  </div>
);

const sections = [
  {
    title: 'SOLIDWORKS Tools',
    links: [
      ['swBuilder', 'Property Tab Builder'],
      ['swRx', 'SOLIDWORKS Rx'],
      ['swRx', 'Performance Benchmark Test'],
      ['compare', 'Compare My Score'],
      ['wizard', 'Copy Settings Wizard'],
      ['products', 'My Products'],
    ],
  },
  {
    title: 'Online Resources',
    links: [
      ['market', '3DEXPERIENCE Marketplace'],
      ['handshake', 'Partner Solutions'],
    ],
  },
  { title: 'Subscription Services', links: [['globe', 'Subscription Services']] },
];

const ResourcesPane = () => (
  <aside className="w-[209px] shrink-0 border-l border-[#808080] bg-[#f7f7f7] text-[#4a4a4a]">
    <div className="flex h-[22px] items-center border-b border-black bg-[#a9abb0] pl-[9px] pr-[7px] text-black">
      <button aria-label="Collapse pane">
        <svg viewBox="0 0 12 10" width={12} height={10} fill="none" stroke="#111" strokeWidth="1.500">
          <path d="M5 1L1 5l4 4M10 1L6 5l4 4" />
        </svg>
      </button>
      <h2 className="flex-1 text-center font-bold">SOLIDWORKS Resources</h2>
      <button aria-label="Pin pane"><Icon name="pinDark" size={14} /></button>
    </div>
    <a href="#welcome" className="mb-5 ml-[14px] mt-[25px] flex h-7 items-center gap-1">
      <Icon name="home" />
      Welcome to SOLIDWORKS
    </a>
    {sections.map((s) => (
      <section key={s.title} className="mb-[23px] ml-[14px] mr-7 border-t border-[#808080]">
        <h3 className="flex h-[23px] items-center justify-between pl-[3px] pr-2 pt-px font-bold text-[#333]">
          {s.title}
          <svg viewBox="0 0 12 8" width={12} height={8}><path d="M1 7l5-5 5 5" fill="none" stroke="#555" strokeWidth="1.800" /></svg>
        </h3>
        {s.links.map(([icon, label]) => (
          <a
            key={label}
            href="#resource"
            className={`flex items-center gap-1 pl-0.5 leading-[13px] ${label.length > 21 ? 'h-[30px]' : 'h-7'}`}
          >
            <span className="pb-1"><Icon name={icon} /></span>
            <span>{label}</span>
          </a>
        ))}
      </section>
    ))}
  </aside>
);

const SketchToolbar = () => (
  <aside className="w-[31px] shrink-0 bg-[#f7f7f7]">
    <div className="border-b border-l border-[#808080] pb-[3px] pt-[3px]">
      <div className="ml-1 h-[11px] border-t-2 border-dotted border-[#a0a0a0]" />
      {greyCurves.map((d, i) => (
        <div key={d} className={i === 5 ? 'mt-px border-t border-[#808080] pt-1.5' : undefined}>
          <button aria-label={`Sketch tool ${i + 1}`} className="flex h-[26px] items-center pl-1.5">
            <svg viewBox="0 0 20 20" width={20} height={20} fill="none" stroke="#c4c4c4" strokeWidth="1.500"><path d={d} /></svg>
          </button>
        </div>
      ))}
    </div>
  </aside>
);

const StatusBar = () => (
  <footer className="flex h-5 items-center border-t border-[#808080] bg-[#f0f0f0]">
    <span className="flex-1">SOLIDWORKS Premium 2018 x64 Edition</span>
    <span className="w-[94px] border-l border-[#d8d8d8] pl-[9px]">Editing Part</span>
    <button className="flex w-[130px] items-center gap-5 border-l border-[#d8d8d8] pl-[30px]">
      MMGS
      <svg viewBox="0 0 6 4" width={6} height={4}><path d="M0 4h6L3 0z" fill="#404040" /></svg>
    </button>
    <button aria-label="Tags" className="flex w-[46px] justify-end border-l border-[#d8d8d8]">
      <svg viewBox="0 0 20 20" width={20} height={18}>
        <path d="M2 6l6-3 10 9-7 6L2 11z" fill="#f4f4f4" stroke="#555" strokeWidth="1.300" />
        <path d="M6 8l7 6M8 6l7 6" stroke="#777" />
      </svg>
    </button>
  </footer>
);

export default function App() {
  return (
    <div className="flex min-h-screen flex-col overflow-hidden bg-white font-['Noto_Sans',sans-serif] text-[11px] text-black">
      <TitleBar />
      <Ribbon />
      <main className="flex flex-1">
        <div className="flex w-0 flex-1 flex-col">
          <TabRow />
          <div className="flex flex-1">
            <LeftToolbar />
            <div className="relative mr-0.5 flex-1 border-r border-black bg-white">
              <Model />
              <ViewToolbar />
              <button
                aria-label="Show feature tree"
                className="absolute left-0 top-[246px] flex h-10 w-2 items-center justify-center border border-l-0 border-[#808080] bg-[#f7f7f7]"
              >
                <span className="size-[5px] rounded-full border border-[#808080] bg-[#d4d4d4]" />
              </button>
              <TaskPaneTabs />
            </div>
          </div>
          <BottomTabs />
        </div>
        <ResourcesPane />
        <SketchToolbar />
      </main>
      <StatusBar />
    </div>
  );
}
